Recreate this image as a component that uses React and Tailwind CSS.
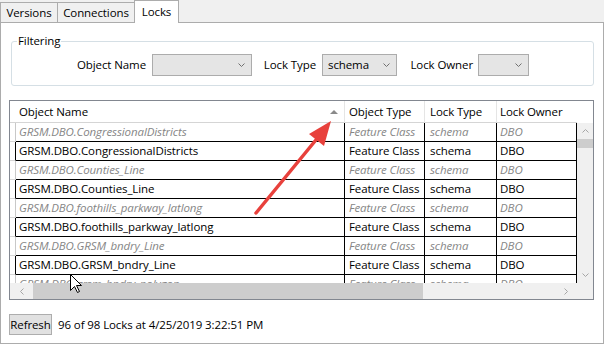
const rows = [
  { name: "GRSM.DBO.CongressionalDistricts", ghost: true },
  { name: "GRSM.DBO.CongressionalDistricts" },
  { name: "GRSM.DBO.Counties_Line", ghost: true },
  { name: "GRSM.DBO.Counties_Line" },
  { name: "GRSM.DBO.foothills_parkway_latlong", ghost: true },
  { name: "GRSM.DBO.foothills_parkway_latlong" },
  { name: "GRSM.DBO.GRSM_bndry_Line", ghost: true },
  { name: "GRSM.DBO.GRSM_bndry_Line" },
  { name: "GRSM.DBO.grsm_bndry_polygon", ghost: true },
];

function Chevron({ dir = "down", color = "#707070" }) {
  const paths = {
    down: "M0.5 0.5 L3.5 3.5 L6.5 0.5",
    up: "M0.5 3.5 L3.5 0.5 L6.5 3.5",
  };
  if (dir === "left" || dir === "right") {
    return (
      <svg width="4" height="7" viewBox="0 0 4 7">
        <path
          d={dir === "left" ? "M3.5 0.5 L0.5 3.5 L3.5 6.5" : "M0.5 0.5 L3.5 3.5 L0.5 6.5"}
          stroke={color}
          fill="none"
        />
      </svg>
    );
  }
  return (
    <svg width="7" height="4" viewBox="0 0 7 4">
      <path d={paths[dir]} stroke={color} fill="none" />
    </svg>
  );
}

function Combo({ width, value }) {
  return (
    <div
      className={`flex h-[22px] items-center justify-between border border-[#acacac] bg-[#e5e5e5] pl-[5px] pr-[6px] ${width}`}
    >
      <span>{value}</span>
      <Chevron />
    </div>
  );
}

function Row({ name, ghost }) {
  const tone = ghost ? "italic text-[#868686]" : "text-black";
  return (
    <div className={`flex h-[19px] shrink-0 ${tone}`}>
      <div
        className={`w-[6px] border-b border-r border-b-[#d6d6d6] ${ghost ? "border-r-[#c8c8c8]" : "border-r-black"}`}
      />
      <div className="flex w-[329px] items-center overflow-hidden whitespace-nowrap border-b border-r border-black pl-[3px]">
        {name}
      </div>
      <div className="flex w-[80px] items-center overflow-hidden whitespace-nowrap border-b border-r border-black pl-[4px]">
        Feature Class
      </div>
      <div className="flex w-[72px] items-center overflow-hidden whitespace-nowrap border-b border-r border-black pl-[5px]">
        schema
      </div>
      <div className="flex w-[80px] items-center overflow-hidden whitespace-nowrap border-b border-r border-black pl-[3px]">
        DBO
      </div>
    </div>
  );
}

export default function App() {
  return (
    <div className="relative h-[344px] w-[604px] overflow-hidden bg-[#f0f0f0] font-['Open_Sans',sans-serif] text-[11.5px] leading-none tracking-[-0.1px] text-black">
      {/* tabs */}
      <div className="flex h-[22px] items-end">
        <div className="flex h-[20px] w-[58px] items-center justify-center border border-b-0 border-[#acacac] bg-[#f0f0f0]">
          Versions
        </div>
        <div className="-ml-px flex h-[20px] w-[78px] items-center justify-center border border-b-0 border-[#acacac] bg-[#f0f0f0]">
          Connections
        </div>
        <div className="relative z-10 -mb-px -ml-px flex h-[23px] w-[45px] items-center justify-center border border-b-0 border-[#acacac] bg-white pb-[1px]">
          Locks
        </div>
      </div>

      <div className="h-[322px] w-[604px] border border-[#acacac] bg-white">
        {/* filtering */}
        <fieldset className="ml-[10px] mt-[10px] w-[583px] rounded-[3px] border border-[#d5dfe5] pb-[9px]">
          <legend className="ml-[5px] px-[1px] leading-[16px]">Filtering</legend>
          <div className="flex items-center pt-[5px]">
            <span className="w-[134px] text-right">Object Name</span>
            <div className="ml-[6px]">
              <Combo width="w-[100px]" value="" />
            </div>
            <span className="w-[64px] text-right">Lock Type</span>
            <div className="ml-[6px]">
              <Combo width="w-[75px]" value="schema" />
            </div>
            <span className="w-[76px] text-right">Lock Owner</span>
            <div className="ml-[5px]">
              <Combo width="w-[51px]" value="" />
            </div>
          </div>
        </fieldset>

        {/* grid */}
        <div className="ml-[8px] mt-[14px] flex h-[200px] w-[585px] flex-col border border-[#828790] bg-white">
          <div className="flex h-[22px] shrink-0">
            <div className="flex w-[335px] items-center justify-between border-b border-r border-b-[#d5d5d5] border-r-[#e5e5e5] pl-[9px] pr-[6px]">
              <span>Object Name</span>
              <svg width="8" height="4" viewBox="0 0 8 4">
                <path d="M0 4 L4 0 L8 4 Z" fill="#8a8a8a" />
              </svg>
            </div>
            <div className="flex w-[80px] items-center border-b border-r border-b-[#d5d5d5] border-r-[#e5e5e5] pl-[4px]">
              Object Type
            </div>
            <div className="flex w-[72px] items-center border-b border-r border-b-[#d5d5d5] border-r-[#e5e5e5] pl-[5px]">
              Lock Type
            </div>
            <div className="flex w-[80px] items-center border-b border-b-[#d5d5d5] pl-[3px]">
              Lock Owner
            </div>
            <div className="flex-1" />
          </div>

          <div className="flex h-[160px] shrink-0">
            <div className="flex h-full w-[567px] flex-col overflow-hidden">
              {rows.map((r, i) => (
                <Row key={i} name={r.name} ghost={r.ghost} />
              ))}
            </div>
            <div className="flex w-[16px] flex-col items-center bg-[#f0f0f0]">
              <div className="flex h-[16px] items-center justify-center">
                <Chevron dir="up" color="#a6a6a6" />
              </div>
              <div className="h-[9px] w-full bg-[#cdcdcd]" />
              <div className="flex-1" />
              <div className="flex h-[16px] items-center justify-center">
                <Chevron dir="down" color="#a6a6a6" />
              </div>
            </div>
          </div>

          <div className="flex h-[16px] shrink-0 bg-[#f0f0f0]">
            <div className="flex w-[23px] items-center justify-center">
              <Chevron dir="left" color="#a6a6a6" />
            </div>
            <div className="w-[390px] bg-[#cdcdcd]" />
            <div className="flex-1" />
            <div className="flex w-[23px] items-center justify-center">
              <Chevron dir="right" color="#a6a6a6" />
            </div>
            <div className="w-[16px]" />
          </div>
        </div>

        {/* footer */}
        <div className="ml-[8px] mt-[14px] flex items-center">
          <div className="flex h-[21px] w-[43px] items-center justify-center border border-[#adadad] bg-[#e1e1e1]">
            Refresh
          </div>
          <span className="ml-[6px]">96 of 98 Locks at 4/25/2019 3:22:51 PM</span>
        </div>
      </div>

      {/* annotation arrow */}
      <svg className="pointer-events-none absolute left-0 top-0" width="604" height="344">
        <line x1="256" y1="213" x2="320" y2="135" stroke="#e8413c" strokeWidth="3.5" strokeLinecap="round" />
        <path d="M331 121 L309 134 L324 146 Z" fill="#e8413c" />
      </svg>

      {/* mouse cursor */}
      <svg className="pointer-events-none absolute left-[70px] top-[274px]" width="13" height="20" viewBox="0 0 13 20">
        <path
          d="M0.5 0.5 L0.5 16.5 L4.5 12.5 L7.5 18.5 L9.5 17.5 L6.5 11.5 L11.5 11.5 Z"
          fill="white"
          stroke="black"
          strokeLinejoin="round"
        />
      </svg>
    </div>
  );
}
